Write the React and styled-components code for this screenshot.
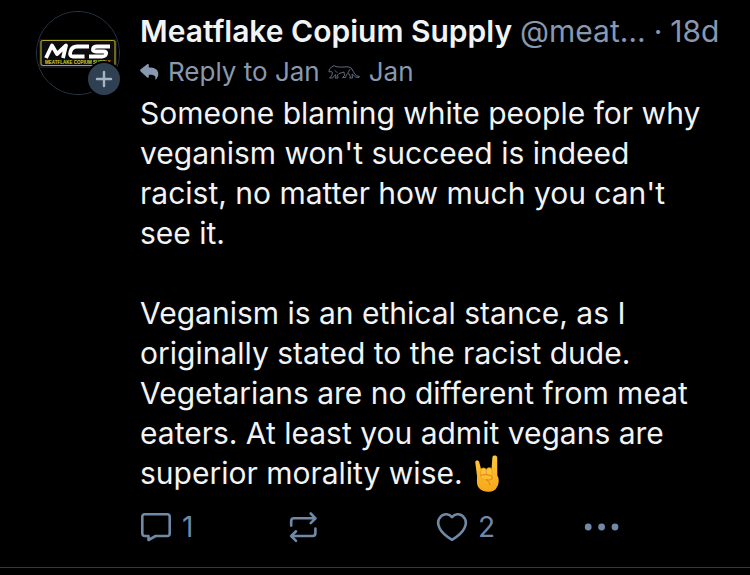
import React from "react";
import styled, { createGlobalStyle } from "styled-components";

const GlobalStyle = createGlobalStyle`
  * { box-sizing: border-box; }
  body {
    margin: 0;
    background: #000;
    color: #f1f3f5;
    font-family: Inter, "Liberation Sans", sans-serif;
  }
`;

const Post = styled.article`
  display: flex;
  align-items: flex-start;
  gap: 20px;
  padding: 11px 30px 21px 36px;
  border-bottom: 1px solid #2c3a4e;
`;

const AvatarWrap = styled.div`
  position: relative;
  flex: none;
  width: 84px;
  height: 84px;
`;

const AvatarLink = styled.a`
  display: block;
  height: 100%;
  border: 1px solid #2b3a4b;
  border-radius: 50%;
  overflow: hidden;

  svg { display: block; width: 100%; height: 100%; }
`;

const FollowButton = styled.button`
  position: absolute;
  right: -2px;
  bottom: -2px;
  display: flex;
  align-items: center;
  justify-content: center;
  width: 36px;
  height: 36px;
  padding: 0;
  border: 2px solid #000;
  border-radius: 50%;
  background: #2e4052;
  color: #a5b4c5;
`;

const Content = styled.div`
  flex: 1;
  min-width: 0;
`;

const Header = styled.header`
  display: flex;
  align-items: baseline;
  gap: 8px;
  font-size: 30px;
  line-height: 40px;
  color: #8798b0;
  white-space: nowrap;
`;

const NameLink = styled.a`
  color: #f1f3f5;
  font-weight: 600;
  text-decoration: none;
`;

const HandleLink = styled.a`
  color: inherit;
  text-decoration: none;
`;

const ReplyLine = styled.div`
  display: flex;
  align-items: center;
  gap: 8px;
  height: 42px;
  font-size: 26px;
  line-height: 42px;
  color: #8798b0;
`;

const Body = styled.div`
  font-size: 30px;
  line-height: 40px;

  p { margin: 0 0 40px; }
  p:last-child { margin: 0; }
  svg { vertical-align: middle; margin: -6px 0 -2px; }
`;

const Actions = styled.div`
  display: grid;
  grid-template-columns: repeat(3, 148px) auto;
  justify-content: start;
  margin-top: 15px;
`;

const ActionButton = styled.button`
  display: flex;
  align-items: center;
  gap: 10px;
  height: 38px;
  padding: 0;
  border: 0;
  background: none;
  color: #6f89a6;
  font: inherit;
  font-size: 28px;
`;

function BrandLogo() {
  return (
    <svg viewBox="0 0 82 82" role="img" aria-label="MCS Meatflake Copium Supply">
      <rect width="82" height="82" fill="#000" />
      <rect x="2" y="27" width="78" height="29" fill="#19171b" />
      <rect x="4" y="28.5" width="74" height="25" rx="2" fill="#0c0b0d" stroke="#aaa42b" strokeWidth="1.2" />
      <g fill="none" stroke="#fff" strokeWidth="3.8" strokeLinejoin="round">
        <path d="M9 46 L15 33.5 L20 42 L29 33.5 L26 46" />
        <path d="M52 34.5 H40 Q35 34.5 33.5 39.5 Q32 44.5 36 44.5 H47.5" />
        <path d="M73 34.5 H60 Q56.5 34.5 56 37 Q55.5 39.5 59 39.5 H66.5 Q70 39.5 69 42 Q68.2 44.5 65 44.5 H52" />
      </g>
      <text x="8" y="52" fill="#d9d52f" fontFamily="Liberation Sans, sans-serif" fontSize="4.5" fontWeight="700">
        MEATFLAKE COPIUM SUPPLY
      </text>
    </svg>
  );
}

function PlusIcon() {
  return (
    <svg width="18" height="18" viewBox="0 0 18 18" stroke="currentColor" strokeWidth="2.4" strokeLinecap="round" aria-hidden="true">
      <path d="M9 2V16M2 9H16" />
    </svg>
  );
}

function ReplyIcon() {
  return (
    <svg width="20" height="20" viewBox="0 0 20 20" fill="currentColor" aria-hidden="true">
      <path d="M.7 7.3 7.2 2.2c.7-.6 1.6-.1 1.6.8v2.6c5.4.1 9.5 1.6 9.5 6.5 0 2-.9 3.9-2.2 5.2-.5.5-1.1.1-.9-.5.9-2.8-.9-4-6.4-4v2c0 .9-.9 1.4-1.6.8L.7 9.4a1.4 1.4 0 0 1 0-2.1Z" />
    </svg>
  );
}

function LeopardIcon() {
  return (
    <svg width="33" height="16" viewBox="0 0 33 16" fill="none" stroke="#64758b" strokeWidth=".9" strokeLinejoin="round" strokeLinecap="round" role="img" aria-label="leopard">
      <path d="M1 7.5 1.5 5 4 2.8 6 1.5l2 1.2 4 .4 8-.3q4 .2 5 4.3l2 3.2q1.5 2.2 4.5 2.2l-.5 1q-4 .4-6-2.8l-1-.7.5 4h-3l1-1-2-4-2 1.5-1 3h-3l2-2-.5-3.5L11 9.5l-1.5 1.5.5 3H7l1-1-.5-2.5L4.5 14H1.5l2-2 1-3L4 8Z" />
      <path d="M7 6.5 9 8.5M22 5.5l-2 3" />
    </svg>
  );
}

function HornsIcon() {
  return (
    <svg width="32" height="40" viewBox="0 0 32 40" role="img" aria-label="sign of the horns">
      <defs>
        <linearGradient id="skin" x1="0" y1="0" x2="0" y2="1">
          <stop offset="0" stopColor="#ffc83d" />
          <stop offset="1" stopColor="#f7a719" />
        </linearGradient>
      </defs>
      <path
        fill="url(#skin)"
        d="M4.2 8.1C4.8 6.2 7.5 6.1 8.2 8L10.4 16.5 20.5 15.5 21.4 3.2C21.6.8 26 .8 26.2 3.4L26.3 21.5C28.9 25.5 27.8 31.6 24.4 35.4 20.6 38.7 11.6 38.5 8.2 34.2 5.4 31.3 5.9 26.8 6.1 22.8Z"
      />
      <rect x="9.7" y="14" width="5.6" height="11" rx="2.6" fill="#ffc234" stroke="#e59a1c" strokeWidth=".7" />
      <rect x="15.4" y="13.7" width="5.6" height="11" rx="2.6" fill="#ffc234" stroke="#e59a1c" strokeWidth=".7" />
      <path d="M9.8 21.2q5-1.5 9.5.2 3 1 1.5 3.7-1.3 1.5-6 .6 3.5 1.3 4.1 5" fill="#ffbd2d" stroke="#d58417" strokeWidth="1" strokeLinecap="round" />
    </svg>
  );
}

function CommentIcon() {
  return (
    <svg width="32" height="30" viewBox="0 0 32 30" fill="none" stroke="currentColor" strokeWidth="2.6" strokeLinejoin="round" aria-hidden="true">
      <path d="M4.8 2.3H27.2Q29.7 2.3 29.7 4.8V21.5Q29.7 24 27.2 24H15.6L8.5 28V24H4.8Q2.3 24 2.3 21.5V4.8Q2.3 2.3 4.8 2.3Z" />
    </svg>
  );
}

function RepostIcon() {
  return (
    <svg width="32" height="32" viewBox="0 0 32 32" fill="none" stroke="currentColor" strokeWidth="2.6" strokeLinecap="round" strokeLinejoin="round" aria-hidden="true">
      <path d="M3.2 14.6V10Q3.2 7.3 5.9 7.3H27.4M22.7 2.5 27.5 7.3 22.7 12.1" />
      <path d="M27.4 17.5V22Q27.4 25 24.7 25H3.4M8 20.3 3.2 25 8 29.8" />
    </svg>
  );
}

function HeartIcon() {
  return (
    <svg width="32" height="30" viewBox="0 0 32 30" fill="none" stroke="currentColor" strokeWidth="2.6" strokeLinejoin="round" aria-hidden="true">
      <path d="M16 5.1C13.3 1.8 8.5 1.3 5.2 4.1 2 7.2 1.5 11.8 3.4 15.8 5.4 20.3 10.2 24.4 16 27.8 21.8 24.4 26.6 20.3 28.6 15.8 30.5 11.8 30 7.2 26.8 4.1 23.5 1.3 18.7 1.8 16 5.1Z" />
    </svg>
  );
}

function MoreIcon() {
  return (
    <svg width="36" height="10" viewBox="0 0 36 10" fill="currentColor" aria-hidden="true">
      <circle cx="4.2" cy="5" r="3.4" />
      <circle cx="17.6" cy="5" r="3.4" />
      <circle cx="31" cy="5" r="3.4" />
    </svg>
  );
}

export default function App() {
  return (
    <>
      <GlobalStyle />
      <Post>
        <AvatarWrap>
          <AvatarLink href="#profile">
            <BrandLogo />
          </AvatarLink>
          <FollowButton type="button" aria-label="Follow">
            <PlusIcon />
          </FollowButton>
        </AvatarWrap>
        <Content>
          <Header>
            <NameLink href="#profile">Meatflake Copium Supply</NameLink>
            <HandleLink href="#profile">@meat…</HandleLink>
            <span>·</span>
            <time>18d</time>
          </Header>
          <ReplyLine>
            <ReplyIcon />
            <span>Reply to Jan</span>
            <LeopardIcon />
            <span>Jan</span>
          </ReplyLine>
          <Body>
            <p>
              Someone blaming white people for why veganism won't succeed is
              indeed racist, no matter how much you can't see it.
            </p>
            <p>
              Veganism is an ethical stance, as I originally stated to the
              racist dude. Vegetarians are no different from meat eaters. At
              least you admit vegans are superior morality wise. <HornsIcon />
            </p>
          </Body>
          <Actions>
            <ActionButton type="button" aria-label="Reply, 1">
              <CommentIcon />
              <span>1</span>
            </ActionButton>
            <ActionButton type="button" aria-label="Repost">
              <RepostIcon />
            </ActionButton>
            <ActionButton type="button" aria-label="Like, 2">
              <HeartIcon />
              <span>2</span>
            </ActionButton>
            <ActionButton type="button" aria-label="More options">
              <MoreIcon />
            </ActionButton>
          </Actions>
        </Content>
      </Post>
    </>
  );
}
